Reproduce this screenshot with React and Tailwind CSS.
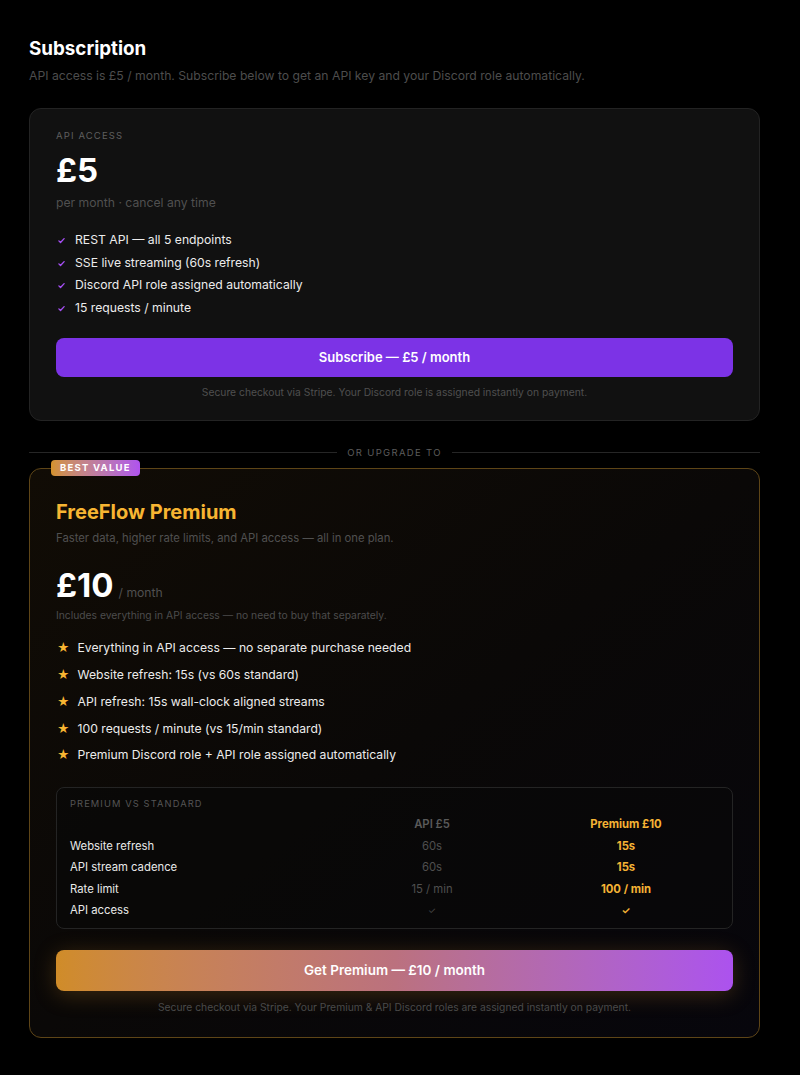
import React from 'react';

const apiFeatures = [
  'REST API — all 5 endpoints',
  'SSE live streaming (60s refresh)',
  'Discord API role assigned automatically',
  '15 requests / minute',
];

const premiumFeatures = [
  'Everything in API access — no separate purchase needed',
  'Website refresh: 15s (vs 60s standard)',
  'API refresh: 15s wall-clock aligned streams',
  '100 requests / minute (vs 15/min standard)',
  'Premium Discord role + API role assigned automatically',
];

const compareRows = [
  { label: 'Website refresh', api: '60s', premium: '15s' },
  { label: 'API stream cadence', api: '60s', premium: '15s' },
  { label: 'Rate limit', api: '15 / min', premium: '100 / min' },
  { label: 'API access', api: '✓', premium: '✓', tick: true },
];

function Tick({ className }) {
  return (
    <svg viewBox="0 0 12 12" className={className} fill="none" stroke="currentColor" strokeWidth="1.8" strokeLinecap="round" strokeLinejoin="round">
      <path d="M2.5 6.5l2.2 2.2L9.5 3.5" />
    </svg>
  );
}

function ApiCard() {
  return (
    <div className="rounded-[12px] border border-[#232323] bg-[#111111] px-[26px] pt-[20px] pb-[20px]">
      <div className="text-[9.5px] leading-[14px] tracking-[0.12em] text-[#5f5f5f]">API ACCESS</div>
      <div className="mt-[7px] text-[33px] leading-[40px] font-bold text-white">£5</div>
      <div className="mt-[4px] text-[12.2px] leading-[18px] text-[#505050]">per month · cancel any time</div>
      <ul className="mt-[17px]">
        {apiFeatures.map((f) => (
          <li key={f} className="flex items-center text-[12.2px] leading-[22.7px] text-[#ececec]">
            <Tick className="w-[9px] h-[9px] text-[#a64ff5] ml-[1px] mr-[9px]" />
            {f}
          </li>
        ))}
      </ul>
      <button className="mt-[18px] w-full h-[39px] rounded-[8px] bg-[#7c33e6] text-[13px] font-semibold text-white">
        Subscribe — £5 / month
      </button>
      <p className="mt-[7px] text-center text-[10.3px] leading-[16px] text-[#4f4f4f]">
        Secure checkout via Stripe. Your Discord role is assigned instantly on payment.
      </p>
    </div>
  );
}

function CompareTable() {
  return (
    <div className="mt-[18px] rounded-[8px] border border-[#242424] bg-[#080808]/60 px-[13px] pt-[9px] pb-[6px]">
      <div className="text-[9.3px] leading-[14px] tracking-[0.12em] text-[#555555]">PREMIUM VS STANDARD</div>
      <div className="mt-[3px] grid grid-cols-[261px_202px_186px] text-[11.3px] leading-[21.5px]">
        <div />
        <div className="text-center font-semibold text-[#5a5a5a]">API £5</div>
        <div className="text-center font-bold text-[#f5b335]">Premium £10</div>
        {compareRows.map((r) => (
          <React.Fragment key={r.label}>
            <div className="text-[#e8e8e8]">{r.label}</div>
            <div className={r.tick ? 'text-center text-[9px] text-[#4a4a4a]' : 'text-center text-[#4f4f4f]'}>{r.api}</div>
            <div className={r.tick ? 'text-center text-[10px] font-bold text-[#f5b335]' : 'text-center font-bold text-[#f5b335]'}>{r.premium}</div>
          </React.Fragment>
        ))}
      </div>
    </div>
  );
}

function PremiumCard() {
  return (
    <div className="relative mt-[8px] rounded-[12px] border border-[#5e4517] bg-gradient-to-br from-[#110c05] via-[#0a0807] to-[#07060c] px-[26px] pt-[30px] pb-[22px]">
      <span className="absolute -top-[9px] left-[21px] rounded-[4px] bg-gradient-to-r from-[#d4922a] to-[#b052ee] px-[9px] text-[9.5px] leading-[16px] font-bold tracking-[0.13em] text-white">
        BEST VALUE
      </span>
      <h2 className="text-[20px] leading-[26px] font-bold text-[#f7b532]">FreeFlow Premium</h2>
      <p className="mt-[5px] text-[11.3px] leading-[16px] text-[#505050]">
        Faster data, higher rate limits, and API access — all in one plan.
      </p>
      <div className="mt-[19px] flex items-baseline">
        <span className="text-[33px] leading-[40px] font-bold text-white">£10</span>
        <span className="ml-[5px] text-[12.2px] text-[#505050]">/ month</span>
      </div>
      <p className="mt-[2px] text-[10.3px] leading-[16px] text-[#4c4c4c]">
        Includes everything in API access — no need to buy that separately.
      </p>
      <ul className="mt-[12.6px]">
        {premiumFeatures.map((f) => (
          <li key={f} className="flex items-center text-[12.2px] leading-[26.75px] text-[#ececec]">
            <span className="ml-[1px] mr-[8px] text-[12px] text-[#f7b532]">★</span>
            {f}
          </li>
        ))}
      </ul>
      <CompareTable />
      <button className="mt-[21px] w-full h-[41px] rounded-[8px] bg-gradient-to-r from-[#d08c28] via-[#bb717e] to-[#ac52ee] text-[13.5px] font-semibold text-white shadow-[0_4px_22px_rgba(208,140,40,0.25)]">
        Get Premium — £10 / month
      </button>
      <p className="mt-[8px] text-center text-[10.3px] leading-[16px] text-[#4a4a4a]">
        Secure checkout via Stripe. Your Premium &amp; API Discord roles are assigned instantly on payment.
      </p>
    </div>
  );
}

export default function App() {
  return (
    <div className="min-h-[1075px] bg-black font-['Inter','Liberation_Sans',sans-serif]">
      <div className="ml-[29px] w-[731px] pt-[37px]">
        <h1 className="text-[18.8px] leading-[24px] font-bold text-white">Subscription</h1>
        <p className="mt-[6px] text-[12.2px] leading-[18px] text-[#4d4d4d]">
          API access is £5 / month. Subscribe below to get an API key and your Discord role automatically.
        </p>
        <div className="mt-[23px]">
          <ApiCard />
        </div>
        <div className="mt-[25px] flex items-center gap-[10px]">
          <div className="h-px flex-1 bg-[#262626]" />
          <span className="text-[9.5px] leading-[14px] tracking-[0.14em] text-[#5c5c5c]">OR UPGRADE TO</span>
          <div className="h-px flex-1 bg-[#262626]" />
        </div>
        <PremiumCard />
      </div>
    </div>
  );
}
